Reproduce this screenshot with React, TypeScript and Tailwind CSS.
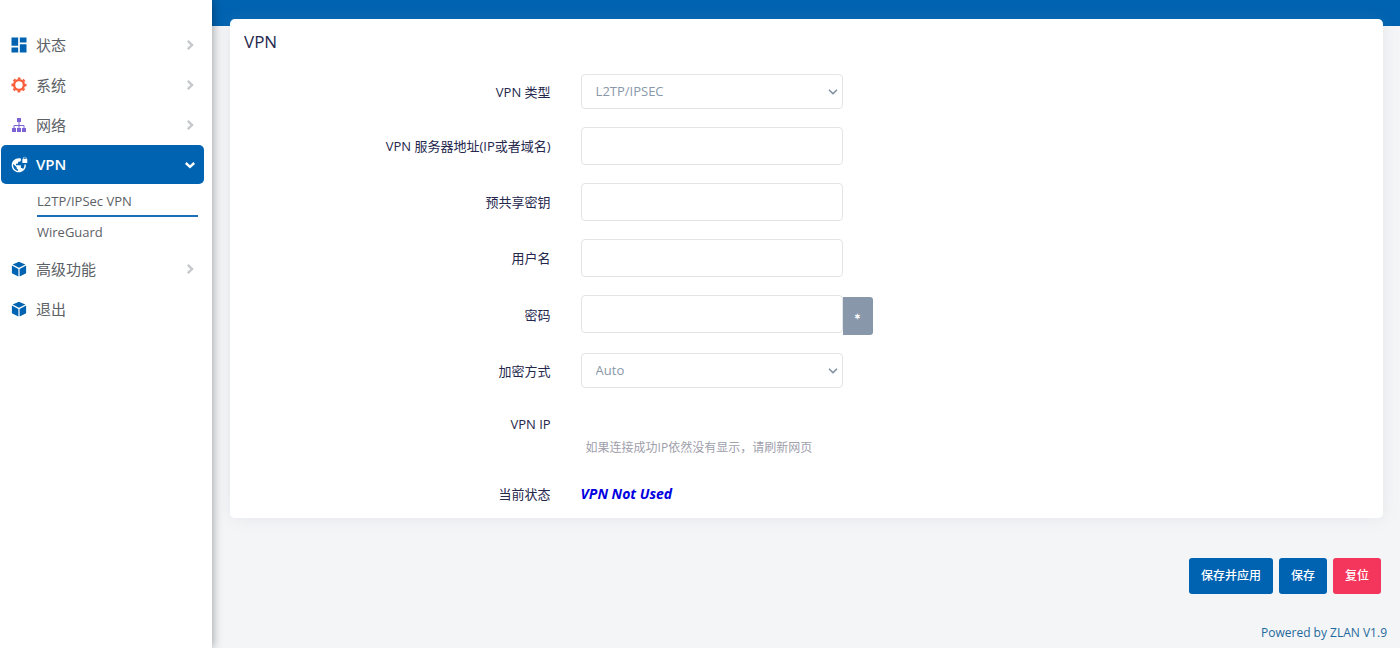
import { useState, type ReactNode } from "react";
import clsx from "clsx";
import { ChevronDown } from "lucide-react";
import { MdDashboard, MdVpnLock } from "react-icons/md";

function GearIcon() {
    return (
        <svg width="16" height="16" viewBox="0 0 16 16" fill="none" stroke="#fb5c3a">
            <circle cx="8" cy="8" r="4.9" strokeWidth="2.4" />
            <circle cx="8" cy="8" r="6.6" strokeWidth="1.8" strokeDasharray="2.8 2.384" strokeDashoffset="1.4" />
        </svg>
    );
}

function NetworkIcon() {
    return (
        <svg width="16" height="16" viewBox="0 0 16 16" fill="#7c62d4">
            <rect x="6" y="1" width="4" height="4" />
            <rect x="1" y="11" width="4" height="4" />
            <rect x="6" y="11" width="4" height="4" />
            <rect x="11" y="11" width="4" height="4" />
            <path d="M8 5v6M3 11V8.5h10V11" fill="none" stroke="#7c62d4" />
        </svg>
    );
}

function CubeIcon() {
    return (
        <svg width="16" height="16" viewBox="0 0 16 16" fill="#0063b1">
            <path d="M8 .7 14.4 3.5 8 6.7 1.6 3.5Z" />
            <path d="M.9 4.6 7.4 8v7.6L.9 12.2Z" />
            <path d="M15.1 4.6 8.6 8v7.6l6.5-3.4Z" />
        </svg>
    );
}

function NavArrow({ open }: { open: boolean }) {
    return (
        <svg width="16" height="16" viewBox="0 0 16 16" fill="none" strokeWidth="2.4" className={open ? "stroke-white" : "stroke-[#c6c8cb]"}>
            <path d={open ? "M3.8 6 8 9.8 12.2 6" : "M5.8 3.8 10 8 5.8 12.2"} />
        </svg>
    );
}

type NavItem = { label: string; icon: ReactNode; children?: string[]; arrow?: boolean };

const navItems: NavItem[] = [
    { label: "状态", icon: <MdDashboard size={20} className="text-[#0063b1]" />, arrow: true },
    { label: "系统", icon: <GearIcon />, arrow: true },
    { label: "网络", icon: <NetworkIcon />, arrow: true },
    { label: "VPN", icon: <MdVpnLock size={17} />, arrow: true, children: ["L2TP/IPSec VPN", "WireGuard"] },
    { label: "高级功能", icon: <CubeIcon />, arrow: true },
    { label: "退出", icon: <CubeIcon /> },
];

function Sidebar() {
    return (
        <aside className="relative z-10 w-[212px] shrink-0 bg-white pt-[25px] pl-px pr-2 shadow-[0_0_10px_rgba(0,0,0,0.4)]">
            <nav>
                <ul>
                    {navItems.map((item) => (
                        <li key={item.label}>
                            <a
                                href="#"
                                className={clsx(
                                    "flex items-center rounded-[5px] pl-2 pr-1.5 text-[15px]",
                                    item.children ? "h-[39px] bg-[#0063b1] font-semibold text-white" : "h-10 text-[#5c6166]"
                                )}
                            >
                                <span className="flex w-5 shrink-0 justify-center">{item.icon}</span>
                                <span className="ml-[7px] flex-1">{item.label}</span>
                                {item.arrow && <NavArrow open={!!item.children} />}
                            </a>
                            {item.children && (
                                <ul className="pt-1 pr-1.5 pl-9 text-[13px] text-[#5c6166]">
                                    {item.children.map((child, i) => (
                                        <li key={child}>
                                            <a
                                                href="#"
                                                className={clsx("flex items-center", i === 0 ? "h-[29px] border-b-2 border-[#1b6fb8]" : "h-8")}
                                            >
                                                {child}
                                            </a>
                                        </li>
                                    ))}
                                </ul>
                            )}
                        </li>
                    ))}
                </ul>
            </nav>
        </aside>
    );
}

function Row({ label, htmlFor, children }: { label: string; htmlFor?: string; children?: ReactNode }) {
    return (
        <div className="grid grid-cols-[7fr_18fr] items-center gap-x-[30px]">
            <label htmlFor={htmlFor} className="pt-0.5 text-right text-[13px] text-[#25274d]">{label}</label>
            <div>{children}</div>
        </div>
    );
}

function SelectBox({ id, options }: { id: string; options: string[] }) {
    return (
        <div className="relative w-[262px]">
            <select id={id} className="block h-[35px] w-full appearance-none rounded border border-[#e2e4e8] bg-white pl-3.5 text-[13px] text-[#8898aa]">
                {options.map((o) => <option key={o}>{o}</option>)}
            </select>
            <ChevronDown size={14} strokeWidth={3} className="pointer-events-none absolute top-[11px] right-[3px] text-[#8594a3]" />
        </div>
    );
}

const inputClass = "block h-[38px] w-[262px] rounded border border-[#e2e4e8] bg-white px-3.5 text-[13px] text-[#525f7f]";

export default function App() {
    const [showPassword, setShowPassword] = useState(false);

    return (
        <div className="flex min-h-screen bg-[#f4f5f7] font-['Open_Sans','Noto_Sans_CJK_SC',sans-serif]">
            <Sidebar />
            <div className="min-w-0 flex-1">
                <div className="h-[26px] bg-[#0063b1]" />
                <main className="relative -mt-[7px] ml-[18px] mr-[17px]">
                    <section className="rounded-[5px] bg-white px-3.5 pt-2.5 pb-3 shadow-[0_0_16px_rgba(136,152,170,0.15)]">
                        <h1 className="text-[17px] leading-[26px] text-[#25274d]">VPN</h1>
                        <form className="mt-[19px] flex flex-col gap-[18px]">
                            <Row label="VPN 类型" htmlFor="type">
                                <SelectBox id="type" options={["L2TP/IPSEC"]} />
                            </Row>
                            <Row label="VPN 服务器地址(IP或者域名)" htmlFor="server">
                                <input id="server" type="text" className={inputClass} />
                            </Row>
                            <Row label="预共享密钥" htmlFor="psk">
                                <input id="psk" type="text" className={inputClass} />
                            </Row>
                            <Row label="用户名" htmlFor="user">
                                <input id="user" type="text" className={inputClass} />
                            </Row>
                            <Row label="密码" htmlFor="password">
                                <div className="flex items-start">
                                    <input id="password" type={showPassword ? "text" : "password"} className={inputClass} />
                                    <button
                                        type="button"
                                        aria-label="显示密码"
                                        onClick={() => setShowPassword(!showPassword)}
                                        className="mt-0.5 h-[38px] w-[30px] rounded-r-[3px] bg-[#8898aa] text-[8px] font-bold text-white"
                                    >
                                        ∗
                                    </button>
                                </div>
                            </Row>
                            <Row label="加密方式" htmlFor="encryption">
                                <SelectBox id="encryption" options={["Auto"]} />
                            </Row>
                            <div>
                                <Row label="VPN IP">
                                    <div className="h-9" />
                                </Row>
                                <div className="grid grid-cols-[7fr_18fr] gap-x-[30px]">
                                    <p className="col-start-2 pl-[5px] text-[12px] leading-3 text-[#a0a0ab]">如果连接成功IP依然没有显示，请刷新网页</p>
                                </div>
                            </div>
                            <div className="pt-2.5">
                                <Row label="当前状态">
                                    <em className="block text-[14px] leading-6 font-bold text-[#0000e0]">VPN Not Used</em>
                                </Row>
                            </div>
                        </form>
                    </section>
                    <div className="mt-10 mr-0.5 flex justify-end gap-1.5 text-[12px] font-medium text-white">
                        <button type="button" className="h-9 rounded-[3px] bg-[#0063b1] px-3">保存并应用</button>
                        <button type="button" className="h-9 rounded-[3px] bg-[#0063b1] px-3">保存</button>
                        <button type="button" className="h-9 rounded-[3px] bg-[#f5365c] px-3">复位</button>
                    </div>
                </main>
                <footer className="mt-[30px] pr-[13px] text-right text-[12px] leading-[18px]">
                    <a href="#" className="text-[#1f6a9c]">Powered by ZLAN V1.9</a>
                </footer>
            </div>
        </div>
    );
}
